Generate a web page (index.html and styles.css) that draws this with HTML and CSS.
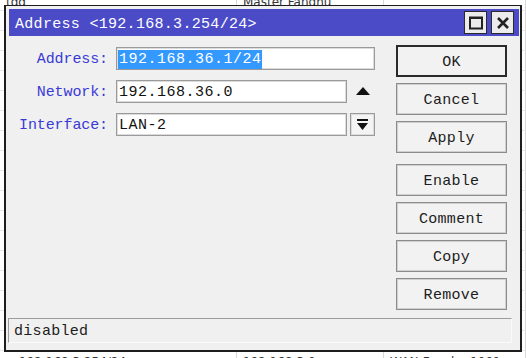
FILE: index.html
```html
<!DOCTYPE html>
<html lang="en">
<head>
    <meta charset="UTF-8">
    <title>Address</title>
    <link rel="stylesheet" href="styles.css">
</head>
<body>
    <div class="list">
        <div class="row"><span class="col c1">tdd</span><span class="col c2">Master Fanghu</span><span class="col c3"></span></div>
        <div class="row"><span class="col c1"></span><span class="col c2"></span><span class="col c3"></span></div>
        <div class="row"><span class="col c1"></span><span class="col c2"></span><span class="col c3"></span></div>
        <div class="row"><span class="col c1"></span><span class="col c2"></span><span class="col c3"></span></div>
        <div class="row"><span class="col c1"></span><span class="col c2"></span><span class="col c3"></span></div>
        <div class="row"><span class="col c1"></span><span class="col c2"></span><span class="col c3"></span></div>
        <div class="row"><span class="col c1"></span><span class="col c2"></span><span class="col c3"></span></div>
        <div class="row"><span class="col c1"></span><span class="col c2"></span><span class="col c3"></span></div>
        <div class="row"><span class="col c1"></span><span class="col c2"></span><span class="col c3"></span></div>
        <div class="row"><span class="col c1"></span><span class="col c2"></span><span class="col c3"></span></div>
        <div class="row"><span class="col c1"></span><span class="col c2"></span><span class="col c3"></span></div>
        <div class="row"><span class="col c1"></span><span class="col c2"></span><span class="col c3"></span></div>
        <div class="row"><span class="col c1"></span><span class="col c2"></span><span class="col c3"></span></div>
        <div class="row"><span class="col c1"></span><span class="col c2"></span><span class="col c3"></span></div>
        <div class="row"><span class="col c1"></span><span class="col c2"></span><span class="col c3"></span></div>
        <div class="row"><span class="col c1"></span><span class="col c2"></span><span class="col c3"></span></div>
        <div class="row"><span class="col c1"></span><span class="col c2"></span><span class="col c3"></span></div>
        <div class="row"><span class="col c1"></span><span class="col c2"></span><span class="col c3"></span></div>
        <div class="row"><span class="col c1">&#9670; 192.168.3.254/24</span><span class="col c2">192.168.3.0</span><span class="col c3">WAN-Fanghu 1001</span></div>
    </div>

    <div class="dialog">
        <div class="titlebar">
            <span class="title">Address &lt;192.168.3.254/24&gt;</span>
            <span class="tb-btn">
                <svg width="14" height="14" viewBox="0 0 14 14"><rect x="1" y="1.5" width="12" height="11" fill="none" stroke="#222" stroke-width="2"/><rect x="1" y="1" width="12" height="2" fill="#222"/></svg>
            </span>
            <span class="tb-btn">
                <svg width="14" height="14" viewBox="0 0 14 14"><path d="M2 2 L12 12 M12 2 L2 12" stroke="#222" stroke-width="2.6"/></svg>
            </span>
        </div>

        <div class="body">
            <div class="form">
                <div class="field">
                    <span class="label">Address:</span>
                    <div class="input wide"><span class="sel">192.168.36.1/24</span></div>
                </div>
                <div class="field">
                    <span class="label">Network:</span>
                    <div class="input">192.168.36.0</div>
                    <span class="side">
                        <svg width="14" height="9" viewBox="0 0 14 9"><path d="M7 0 L14 8 L0 8 Z" fill="#111"/></svg>
                    </span>
                </div>
                <div class="field">
                    <span class="label">Interface:</span>
                    <div class="input">LAN-2</div>
                    <span class="side dd">
                        <svg width="11" height="14" viewBox="0 0 11 14"><rect x="0" y="1" width="11" height="2" fill="#111"/><path d="M0 5 L11 5 L5.5 12 Z" fill="#111"/></svg>
                    </span>
                </div>
            </div>

            <div class="buttons">
                <div class="btn default">OK</div>
                <div class="btn">Cancel</div>
                <div class="btn">Apply</div>
                <div class="btn spaced">Enable</div>
                <div class="btn">Comment</div>
                <div class="btn">Copy</div>
                <div class="btn">Remove</div>
            </div>
        </div>

        <div class="status">disabled</div>
    </div>
</body>
</html>
```

FILE: styles.css
```css
html, body {
    margin: 0;
    padding: 0;
}

body {
    width: 526px;
    height: 358px;
    position: relative;
    overflow: hidden;
    background-color: #fff;
    font-family: "Liberation Mono", "DejaVu Sans Mono", monospace;
}

/* background list behind the dialog */
.list {
    margin-top: -9px;
}

.row {
    display: flex;
    height: 20px;
    border-bottom: 1px solid #e6e6e6;
    box-sizing: border-box;
    font-family: "DejaVu Sans", sans-serif;
    font-size: 12px;
    color: #333;
}

.col {
    padding: 4px 0 0 6px;
    border-right: 1px solid #d8d8d8;
    white-space: nowrap;
}

.c1 { width: 230px; }
.c2 { width: 140px; }
.c3 { flex: 1; }

/* dialog */
.dialog {
    position: absolute;
    left: 4px;
    top: 5px;
    width: 518px;
    height: 347px;
    box-sizing: border-box;
    border: 2px solid #1e1e1e;
    border-top-width: 1px;
    padding: 3px 1px 7px 3px;
    background-color: #f0f0f0;
    display: flex;
    flex-direction: column;
}

.titlebar {
    height: 27px;
    background-color: #4b4bc8;
    display: flex;
    align-items: center;
    padding: 0 5px 0 6px;
    gap: 4px;
}

.title {
    flex: 1;
    color: #fff;
    font-size: 15px;
    letter-spacing: 0.3px;
    padding-top: 3px;
}

.tb-btn {
    width: 21px;
    height: 21px;
    border: 1px solid #2a2a2a;
    background-color: #ececec;
    display: flex;
    align-items: center;
    justify-content: center;
}

.body {
    flex: 1;
    display: flex;
    gap: 21px;
    padding-top: 9px;
}

.form {
    display: flex;
    flex-direction: column;
    gap: 10px;
    margin-top: 2px;
}

.field {
    display: flex;
    align-items: center;
    gap: 8px;
    height: 23px;
}

.label {
    width: 99px;
    text-align: right;
    color: #3a3ad6;
    font-size: 15px;
    letter-spacing: -0.1px;
    padding-top: 2px;
}

.input {
    width: 231px;
    height: 23px;
    box-sizing: border-box;
    background-color: #fff;
    border: 1px solid #9a9a9a;
    box-shadow: inset 0 0 0 1px #dcdcdc;
    padding: 1px 0 0 2px;
    font-size: 15px;
    letter-spacing: 0.5px;
    line-height: 21px;
    color: #111;
    white-space: nowrap;
}

.input.wide {
    width: 259px;
    padding-left: 1px;
}

.sel {
    background-color: #3399ff;
    color: #fff;
    padding: 1px 0 1px 1px;
}

.side {
    width: 25px;
    height: 23px;
    margin-left: -5px;
    display: flex;
    align-items: center;
    justify-content: center;
}

.side.dd {
    box-sizing: border-box;
    background-color: #f4f4f4;
    border: 1px solid #9a9a9a;
    box-shadow: inset 0 0 0 1px #dcdcdc;
}

.buttons {
    display: flex;
    flex-direction: column;
    gap: 6px;
}

.btn {
    width: 111px;
    height: 32px;
    box-sizing: border-box;
    border: 1px solid #8c8c8c;
    box-shadow: inset 0 0 0 1px #cfcfcf;
    background-color: #f2f2f2;
    display: flex;
    align-items: center;
    justify-content: center;
    padding-top: 2px;
    font-size: 15px;
    letter-spacing: 0.3px;
    color: #1c1c1c;
}

.btn.default {
    border: 2px solid #2a2a2a;
    box-shadow: none;
}

.btn.spaced {
    margin-top: 5px;
}

.status {
    height: 25px;
    box-sizing: border-box;
    margin: 0 7px 0 -1px;
    border-top: 1px solid #9c9c9c;
    border-left: 1px solid #9c9c9c;
    border-right: 1px solid #fafafa;
    border-bottom: 1px solid #fafafa;
    padding: 2px 0 0 5px;
    font-size: 15px;
    letter-spacing: 0.3px;
    line-height: 22px;
    color: #1c1c1c;
}
```
